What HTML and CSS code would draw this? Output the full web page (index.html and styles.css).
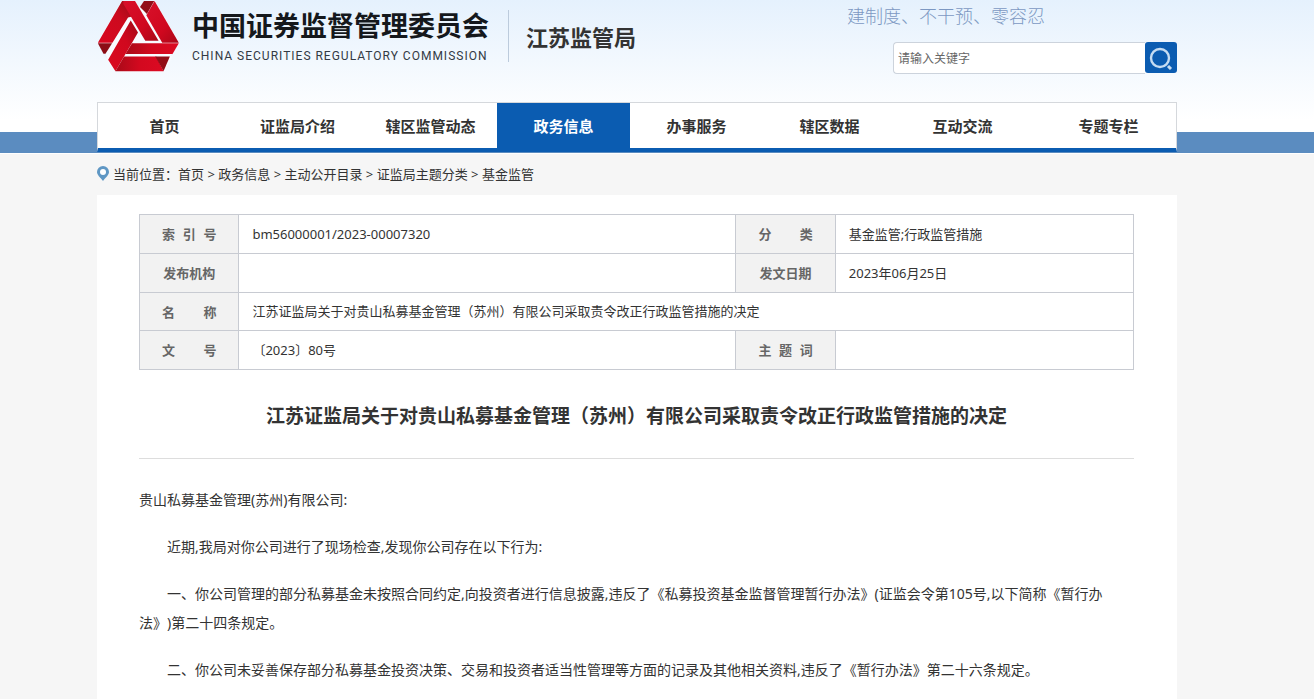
FILE: index.html
```html
<!DOCTYPE html>
<html lang="zh-CN">
<head>
<meta charset="utf-8">
<title>江苏监管局</title>
<link rel="stylesheet" href="styles.css">
</head>
<body>
<header class="site-header">
  <div class="container masthead">
    <svg class="logo" viewBox="20 0 249 220" aria-hidden="true">
      <defs>
        <linearGradient id="left" x1="0" y1="1" x2="1" y2="0"><stop offset="0" stop-color="#d9061f"/><stop offset=".6" stop-color="#cc0a1e"/><stop offset="1" stop-color="#960e18"/></linearGradient>
        <linearGradient id="down" x1="0" y1="0" x2="1" y2="1"><stop offset="0" stop-color="#d8102a"/><stop offset=".6" stop-color="#d0081f"/><stop offset="1" stop-color="#a80818"/></linearGradient>
        <linearGradient id="bar" x1="0" y1="0" x2="1" y2="0"><stop offset="0" stop-color="#a80a18"/><stop offset=".5" stop-color="#d3091f"/><stop offset="1" stop-color="#dc0a22"/></linearGradient>
        <linearGradient id="rise" x1="0" y1="1" x2="1" y2="0"><stop offset="0" stop-color="#db0a20"/><stop offset=".6" stop-color="#d0081e"/><stop offset="1" stop-color="#a00a18"/></linearGradient>
      </defs>
      <path fill="#f8fbff" d="M94 2H194L268 130 222 217H74L21 130Z"/>
      <path fill="#e9f3fd" d="M130 2H162L148 22ZM21 130 35 160 53 181 45 163ZM268 130 248 166 238 170 246 163Z"/>
      <path fill="url(#left)" d="M95 3H101L129 49 113 53 66 129H22Z"/>
      <path fill="#8c0d16" d="M22 130H65L45 162H39Z"/>
      <path fill="url(#down)" d="M99 3H134L205 123H165L99 12Z"/>
      <path fill="#920d17" d="M161 3H192L170 42 149 21Z"/>
      <path fill="url(#down)" d="M193 3 266 129H216L168 46Z"/>
      <path fill="url(#bar)" d="M125 130H266L247 163H105Z"/>
      <path fill="url(#rise)" d="M121 62 143 98 79 208 75 215 53 180Z"/>
      <path fill="url(#bar)" d="M101 170H198L220 215H75Z"/>
      <path fill="#920d17" d="M195 170H239L220 215Z"/>
    </svg>
    <div class="brand">
      <strong class="brand-name">中国证券监督管理委员会</strong>
      <span class="brand-en">CHINA SECURITIES REGULATORY COMMISSION</span>
    </div>
    <div class="bureau">江苏监管局</div>
    <div class="tools">
      <p class="slogan">建制度、不干预、零容忍</p>
      <form class="search">
        <input class="search-input" type="text" placeholder="请输入关键字" aria-label="请输入关键字">
        <button class="search-button" type="button" aria-label="搜索">
          <svg class="search-icon" viewBox="0 0 24 24" fill="none" stroke="#c5dcf2" aria-hidden="true"><circle cx="11" cy="12" r="9" stroke-width="2.400"/><path d="M19 20l3 3" stroke-width="3"/></svg>
        </button>
      </form>
    </div>
  </div>
  <div class="nav-band">
    <nav class="container nav">
      <a class="nav-item" href="#">首页</a>
      <a class="nav-item" href="#">证监局介绍</a>
      <a class="nav-item" href="#">辖区监管动态</a>
      <a class="nav-item active" href="#">政务信息</a>
      <a class="nav-item" href="#">办事服务</a>
      <a class="nav-item" href="#">辖区数据</a>
      <a class="nav-item" href="#">互动交流</a>
      <a class="nav-item last" href="#">专题专栏</a>
    </nav>
  </div>
</header>
<main class="page">
  <div class="container crumbs">
    <svg class="pin" viewBox="0 0 12 15" aria-hidden="true"><path fill="#5f97c4" d="M6 0a6 6 0 0 1 6 6c0 3-3 5-6 9C3 11 0 9 0 6a6 6 0 0 1 6-6z"/><circle cx="6" cy="6" r="3" fill="#fff"/></svg>
    <span>当前位置：<a href="#">首页</a> &gt; <a href="#">政务信息</a> &gt; <a href="#">主动公开目录</a> &gt; <a href="#">证监局主题分类</a> &gt; <a href="#">基金监管</a></span>
  </div>
  <article class="container content">
    <table class="meta">
      <colgroup><col class="col-label"><col class="col-main"><col class="col-label"><col class="col-side"></colgroup>
      <tr><th scope="row"><span class="label"><i>索</i><i>引</i><i>号</i></span></th><td>bm56000001/2023-00007320</td><th scope="row"><span class="label"><i>分</i><i>类</i></span></th><td>基金监管;行政监管措施</td></tr>
      <tr><th scope="row">发布机构</th><td></td><th scope="row">发文日期</th><td>2023年06月25日</td></tr>
      <tr class="name-row"><th scope="row"><span class="label"><i>名</i><i>称</i></span></th><td colspan="3">江苏证监局关于对贵山私募基金管理（苏州）有限公司采取责令改正行政监管措施的决定</td></tr>
      <tr><th scope="row"><span class="label"><i>文</i><i>号</i></span></th><td>〔2023〕80号</td><th scope="row"><span class="label"><i>主</i><i>题</i><i>词</i></span></th><td></td></tr>
    </table>
    <h1 class="title">江苏证监局关于对贵山私募基金管理（苏州）有限公司采取责令改正行政监管措施的决定</h1>
    <div class="body-text">
      <p>贵山私募基金管理(苏州)有限公司:</p>
      <p class="indent">近期,我局对你公司进行了现场检查,发现你公司存在以下行为:</p>
      <p class="indent">一、你公司管理的部分私募基金未按照合同约定,向投资者进行信息披露,违反了《私募投资基金监督管理暂行办法》(证监会令第105号,以下简称《暂行办法》)第二十四条规定。</p>
      <p class="indent">二、你公司未妥善保存部分私募基金投资决策、交易和投资者适当性管理等方面的记录及其他相关资料,违反了《暂行办法》第二十六条规定。</p>
    </div>
  </article>
</main>
</body>
</html>
```
FILE: styles.css
```css
* { box-sizing: border-box; }
body {
  margin: 0;
  background: #f6f6f6;
  color: #333;
  font: 13px/20px "Noto Sans", "Noto Sans CJK SC", sans-serif;
}
a { color: inherit; text-decoration: none; }
p, h1 { margin: 0; }
.container { max-width: 1080px; margin: 0 auto; }
.site-header, .page { padding-right: 40px; }
.site-header {
  background: linear-gradient(#e5f1fd, #fff 120px);
  border-bottom: 1px solid #fff;
}
.masthead { display: flex; align-items: flex-start; height: 102px; }
.logo { width: 83px; height: 73px; flex: none; }
.brand { display: flex; flex-direction: column; margin-left: 12px; padding-top: 7px; }
.brand-name { font: 700 27px/36px "Noto Sans CJK SC", sans-serif; color: #15181c; white-space: nowrap; }
.brand-en { font: 12px/26px Roboto, sans-serif; color: #333a44; letter-spacing: 1px; white-space: nowrap; }
.bureau {
  margin: 10px 0 0 19px;
  padding-left: 17px;
  border-left: 1px solid #bccbdc;
  font: 700 22px/52px "Noto Sans CJK SC", sans-serif;
  white-space: nowrap;
}
.tools { margin-left: auto; width: 330px; }
.slogan { font: 300 18px/30px "Noto Sans CJK SC", sans-serif; color: #7c98c2; white-space: nowrap; }
.search { display: flex; margin: 12px 0 0 46px; }
.search-input {
  flex: 1;
  min-width: 0;
  height: 32px;
  padding: 0 4px 2px;
  border: 1px solid #ccd3dc;
  border-right: 0;
  border-radius: 4px 0 0 4px;
  background: #fff;
  font: 12px "Noto Sans CJK SC", sans-serif;
}
.search-input::placeholder { color: #666; }
.search-button {
  width: 32px;
  height: 31px;
  padding: 4px;
  border: 0;
  border-radius: 3px;
  background: #0b5cb1;
}
.search-icon { display: block; width: 24px; height: 24px; }
.nav-band {
  height: 51px;
  margin-right: -40px;
  padding-right: 40px;
  background: linear-gradient(transparent 30px, #5b8cc0 30px);
}
.nav {
  display: grid;
  grid-template-columns: repeat(7, 133fr) 147fr;
  height: 50px;
  background: #fff;
  border: 1px solid #d5d8dc;
  border-bottom: 4px solid #0b5cb1;
}
.nav-item { text-align: center; font: 700 15px/45px "Noto Sans CJK SC", sans-serif; }
.nav-item.last { padding-left: 12px; }
.nav-item.active { background: #0b5cb1; color: #fff; }
.crumbs { display: flex; align-items: center; gap: 4px; height: 41px; padding-bottom: 2px; }
.pin { width: 12px; height: 15px; }
.content { background: #fff; padding: 19px 43px 40px 42px; }
.meta { width: 100%; border-collapse: collapse; table-layout: fixed; }
.col-label { width: 10%; }
.col-main { width: 50%; }
.col-side { width: 30%; }
.meta th, .meta td { height: 39px; padding: 0 13px 1px; border: 1px solid #c8cbd2; text-align: left; }
.meta .name-row th, .meta .name-row td { height: 38px; }
.meta th { padding: 0 22px; background: #f2f2f2; color: #666; text-align: center; white-space: nowrap; }
.label { display: flex; justify-content: space-between; }
.label i { font-style: normal; }
.title { padding: 31px 0 27px; border-bottom: 1px solid #ddd; font-size: 19px; line-height: 30px; text-align: center; }
.body-text { padding-top: 26px; font-size: 14px; line-height: 29px; text-spacing-trim: space-all; }
.body-text p { margin-bottom: 18px; }
.body-text .indent { text-indent: 2em; }
```
